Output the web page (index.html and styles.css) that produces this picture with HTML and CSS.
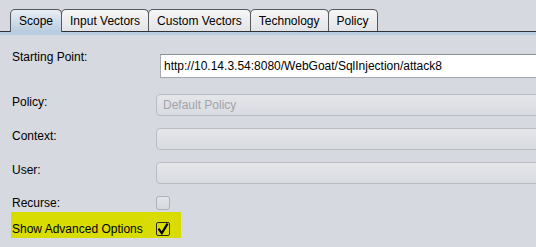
FILE: index.html
```html
<!DOCTYPE html>
<html lang="en">
<head>
    <meta charset="UTF-8">
    <meta name="viewport" content="width=device-width, initial-scale=1.0">
    <title>Active Scan - Scope</title>
    <link rel="stylesheet" href="styles.css">
</head>
<body>
    <div class="tabs">
        <div class="tab active">Scope</div>
        <div class="tab">Input Vectors</div>
        <div class="tab">Custom Vectors</div>
        <div class="tab">Technology</div>
        <div class="tab">Policy</div>
    </div>
    <div class="tab-band"></div>

    <div class="form">
        <div class="row row-start">
            <label class="label">Starting Point:</label>
            <input class="text-field" type="text" value="http://10.14.3.54:8080/WebGoat/SqlInjection/attack8">
        </div>

        <div class="row">
            <label class="label">Policy:</label>
            <div class="combo">Default Policy</div>
        </div>

        <div class="row">
            <label class="label">Context:</label>
            <div class="combo"></div>
        </div>

        <div class="row">
            <label class="label">User:</label>
            <div class="combo"></div>
        </div>

        <div class="row row-check">
            <label class="label">Recurse:</label>
            <span class="checkbox"></span>
        </div>

        <div class="row row-check highlight">
            <label class="label">Show Advanced Options</label>
            <span class="checkbox checked">
                <svg width="12" height="12" viewBox="0 0 12 12">
                    <path d="M2.2 6.6 L4.8 10.2 L10 1.6" fill="none" stroke="#000" stroke-width="2.2" stroke-linejoin="miter" stroke-linecap="square"/>
                </svg>
            </span>
        </div>
    </div>
</body>
</html>
```

FILE: styles.css
```css
body {
    margin: 0;
    background: #d6d9df;
    font-family: "Liberation Sans", Arial, sans-serif;
    font-size: 12px;
    color: #000;
    overflow: hidden;
}
.tabs {
    display: flex;
    align-items: flex-start;
    height: 32px;
    box-sizing: border-box;
    padding: 9px 0 0 10px;
    border-bottom: 1px solid #2f3033;
}
.tab {
    height: 22px;
    box-sizing: border-box;
    padding: 1px 8px 0;
    line-height: 20px;
    border: 1px solid #55585c;
    border-bottom: none;
    border-radius: 5px 5px 0 0;
    margin-right: -1px;
    background: linear-gradient(#f6f6f7, #e3e4e7);
}
.tab.active {
    height: 23px;
    position: relative;
    background: linear-gradient(#e9eef4, #b8cce0);
}
.tab-band {
    height: 3px;
    background: #b9cde2;
}
.form {
    padding: 14px 0 0 12px;
}
.row {
    display: flex;
    align-items: flex-start;
    margin-top: 12px;
}
.label {
    width: 144px;
    flex-shrink: 0;
    line-height: 16px;
}
.row-start {
    margin-top: 0;
    margin-bottom: 16px;
}
.row-start + .row {
    margin-top: 0;
}
.text-field {
    flex: 1;
    margin: 5px -20px 0 4px;
    height: 24px;
    box-sizing: border-box;
    padding: 0 3px;
    border: 1px solid #a4a9b0;
    border-top-color: #8c9097;
    background: #fff;
    font: inherit;
    color: #000;
    outline: none;
}
.combo {
    flex: 1;
    height: 22px;
    box-sizing: border-box;
    margin-right: -20px;
    padding: 0 6px;
    line-height: 20px;
    border: 1px solid #b9bcc3;
    border-radius: 4px;
    background: linear-gradient(#e5e6ea, #d8dbe0);
    color: #a1a4aa;
}
.row-check {
    margin-top: 11px;
}
.checkbox {
    width: 14px;
    height: 14px;
    box-sizing: border-box;
    margin-top: 1px;
    border: 1px solid #aeb2b9;
    border-radius: 3px;
    background: linear-gradient(#e3e5e9, #d5d8de);
}
.checkbox.checked {
    display: flex;
    align-items: center;
    justify-content: center;
    border-color: #2c2d22;
    border-radius: 2px;
    background: transparent;
}
.highlight {
    align-self: flex-start;
    width: 170px;
    box-sizing: border-box;
    margin: 1px 0 0 -1px;
    padding: 9px 0 1px 1px;
    background: #d8dc00;
}
.highlight .label {
    width: 144px;
}
```
